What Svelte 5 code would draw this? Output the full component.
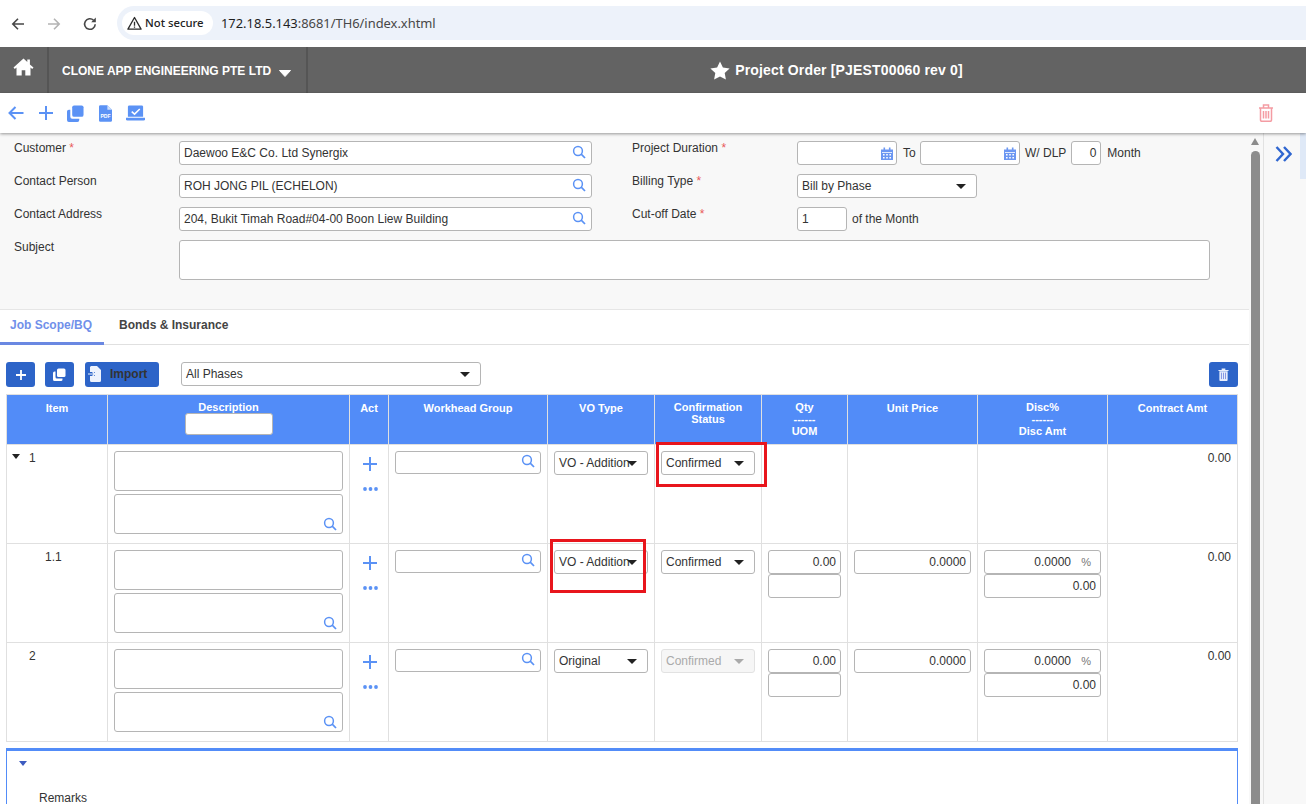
<script>
  const rows = [
    { item: '1', caret: true, vo: 'VO - Addition', status: 'Confirmed', inputs: false },
    { item: '1.1', caret: false, vo: 'VO - Addition', status: 'Confirmed', inputs: true },
    { item: '2', caret: false, vo: 'Original', status: 'Confirmed', disabled: true, inputs: true }
  ];
</script>

{#snippet search(cls)}
  <svg class="ic-search {cls}" viewBox="0 0 14 14" width="14" height="14" aria-hidden="true"><circle cx="6" cy="6" r="4.4" fill="none" stroke="#5b92f5" stroke-width="1.5"/><path d="M9.2 9.2 13 13" stroke="#5b92f5" stroke-width="1.7" fill="none"/></svg>
{/snippet}

{#snippet cal()}
  <svg class="ic-cal" viewBox="0 0 12 13" width="12" height="13" aria-hidden="true"><path d="M0 2.5h12V13H0z" fill="#6c97f2"/><path d="M2.5 0.5h1.6v3H2.5zM7.9 0.5h1.6v3H7.9z" fill="#6c97f2"/><path d="M1 5h10v0.8H1z" fill="#fff"/><path d="M2 7h1.6v1.4H2zM5.2 7h1.6v1.4H5.2zM8.4 7H10v1.4H8.4zM2 10h1.6v1.4H2zM5.2 10h1.6v1.4H5.2zM8.4 10H10v1.4H8.4z" fill="#fff"/></svg>
{/snippet}

{#snippet select(text, disabled = false)}
  <div class="select" class:disabled><span class="sel-text">{text}</span><i class="tri"></i></div>
{/snippet}

<div class="page">
  <div class="chrome">
    <svg class="nav" viewBox="0 0 16 16" width="16" height="16" aria-hidden="true"><path d="M14 8H3M8 2.800 2.800 8 8 13.200" fill="none" stroke="#474747" stroke-width="1.6"/></svg>
    <svg class="nav" viewBox="0 0 16 16" width="16" height="16" aria-hidden="true"><path d="M2 8h11M8 2.800 13.200 8 8 13.200" fill="none" stroke="#b4b4b4" stroke-width="1.6"/></svg>
    <svg class="nav" viewBox="0 0 16 16" width="16" height="16" aria-hidden="true"><path d="M13.200 8.200A5.300 5.300 0 1 1 11.600 4.200" fill="none" stroke="#474747" stroke-width="1.6"/><path d="M13.800 1.600v4.600H9.200z" fill="#474747"/></svg>
    <div class="omni">
      <div class="pill">
        <svg viewBox="0 0 16 16" width="15" height="15" aria-hidden="true"><path d="M8 1.600 15 14H1z" fill="none" stroke="#2b2b2b" stroke-width="1.4" stroke-linejoin="round"/><path d="M7.300 6h1.400v4.400H7.300zM7.300 11.200h1.400v1.400H7.300z" fill="#2b2b2b"/></svg>
        <span>Not secure</span>
      </div>
      <span class="url">172.18.5.143<span class="muted">:8681/TH6/index.xhtml</span></span>
    </div>
  </div>

  <header class="bar">
    <div class="home">
      <svg viewBox="0 0 20 18" width="21" height="18" aria-hidden="true"><path d="M10 0.600 0 9.600l1.300 1.400L3 9.500V17.600h5.200v-5.400h3.600v5.400H17V9.500l1.700 1.500L20 9.600l-3.600-3.200V1.400h-2.600v2.700z" fill="#fff"/></svg>
    </div>
    <div class="company"><span>CLONE APP ENGINEERING PTE LTD</span><svg viewBox="0 0 12 7" width="12" height="7" aria-hidden="true"><path d="M0.500 0.500h11L6 6.500z" fill="#fff" stroke="#fff" stroke-linejoin="round"/></svg></div>
    <div class="title">
      <svg viewBox="0 0 20 19" width="20" height="19" aria-hidden="true"><path d="M10 0.400l2.900 6.100 6.700.9-4.900 4.600 1.200 6.600L10 15.400l-5.900 3.200 1.200-6.600L.4 7.400l6.700-.9z" fill="#fff"/></svg>
      <span>Project Order [PJEST00060 rev 0]</span>
    </div>
  </header>

  <div class="toolbar">
    <svg viewBox="0 0 16 14" width="16" height="14" aria-hidden="true"><path d="M15.500 7H2M7.500 1 1.500 7l6 6" fill="none" stroke="#5b92f5" stroke-width="2"/></svg>
    <svg class="t-plus" viewBox="0 0 14 14" width="14" height="14" aria-hidden="true"><path d="M7 0v14M0 7h14" stroke="#5b92f5" stroke-width="2"/></svg>
    <svg class="t-copy" viewBox="0 0 18 18" width="17" height="17" aria-hidden="true"><rect x="5.500" y="0.500" width="12" height="12" rx="2" fill="#5b92f5"/><path d="M3.500 5H2a2 2 0 0 0-2 2v9a2 2 0 0 0 2 2h9a2 2 0 0 0 2-2v-1.500H5.500a2 2 0 0 1-2-2z" fill="#5b92f5"/></svg>
    <svg class="t-pdf" viewBox="0 0 14 18" width="13" height="17" aria-hidden="true"><path d="M1.500 0H9l5 5v11.500a1.500 1.500 0 0 1-1.500 1.500h-11A1.500 1.500 0 0 1 0 16.500v-15A1.500 1.500 0 0 1 1.500 0z" fill="#5b92f5"/><path d="M9 0v5h5z" fill="#cfe0fd"/><text x="7" y="14" text-anchor="middle" font-family="Liberation Sans, sans-serif" font-size="5.500" font-weight="bold" fill="#fff">PDF</text></svg>
    <svg class="t-check" viewBox="0 0 20 16" width="19" height="16" aria-hidden="true"><path d="M3.500 0h13A1.500 1.500 0 0 1 18 1.500V12H2V1.500A1.500 1.500 0 0 1 3.500 0z" fill="#5b92f5"/><path d="M6 6.500 9 9.200 14.500 3.800" fill="none" stroke="#fff" stroke-width="1.600"/><path d="M0 13h20v1.500a1.500 1.500 0 0 1-1.500 1.500h-17A1.500 1.500 0 0 1 0 14.500z" fill="#5b92f5"/></svg>
    <svg class="t-trash" viewBox="0 0 16 18" width="16" height="18" aria-hidden="true"><path d="M1 4h14M5.500 3.500V1h5v2.500M2.500 4.500v11.500a1.200 1.200 0 0 0 1.200 1.200h8.600a1.200 1.200 0 0 0 1.200-1.200V4.500M5.500 7v7.500M8 7v7.500M10.500 7v7.500" fill="none" stroke="#f49ca3" stroke-width="1.500"/></svg>
  </div>

  <div class="body">
    <main class="main">
      <section class="form">
        <div class="lbl">Customer <em>*</em></div>
        <div class="field"><span>Daewoo E&amp;C Co. Ltd Synergix</span>{@render search('fs')}</div>
        <div class="lbl lbl2">Project Duration <em>*</em></div>
        <div class="inline">
          <div class="field date">{@render cal()}</div><span class="to">To</span>
          <div class="field date">{@render cal()}</div><span class="dlp">W/ DLP</span>
          <div class="field num"><span>0</span></div><span class="mon">Month</span>
        </div>

        <div class="lbl">Contact Person</div>
        <div class="field"><span>ROH JONG PIL (ECHELON)</span>{@render search('fs')}</div>
        <div class="lbl lbl2">Billing Type <em>*</em></div>
        <div class="inline"><div class="billing">{@render select('Bill by Phase')}</div></div>

        <div class="lbl">Contact Address</div>
        <div class="field"><span>204, Bukit Timah Road#04-00 Boon Liew Building</span>{@render search('fs')}</div>
        <div class="lbl lbl2">Cut-off Date <em>*</em></div>
        <div class="inline"><div class="field cutoff"><span>1</span></div><span class="ofm">of the Month</span></div>

        <div class="lbl">Subject</div>
        <div class="subject"></div>
      </section>

      <nav class="tabs">
        <span class="tab active">Job Scope/BQ</span>
        <span class="tab">Bonds &amp; Insurance</span>
      </nav>

      <div class="actions">
        <button class="btn sq" aria-label="Add"><svg viewBox="0 0 10 10" width="10" height="10" aria-hidden="true"><path d="M5 0v10M0 5h10" stroke="#fff" stroke-width="1.800"/></svg></button>
        <button class="btn sq" aria-label="Copy"><svg viewBox="0 0 13 13" width="13" height="13" aria-hidden="true"><rect x="4" y="0.500" width="8.500" height="8.500" rx="1.500" fill="#fff"/><path d="M2.500 3.500H1.500A1.500 1.500 0 0 0 0 5v6.500A1.500 1.500 0 0 0 1.500 13H8a1.500 1.500 0 0 0 1.500-1.500V10.500H4a1.500 1.500 0 0 1-1.500-1.500z" fill="#fff"/></svg></button>
        <button class="btn imp">
          <svg viewBox="0 0 13 16" width="13" height="16" aria-hidden="true"><path d="M3 0h6l4 4v10.500a1.500 1.500 0 0 1-1.500 1.500h-8A1.500 1.500 0 0 1 2 14.500V10h5V6H2V1z" fill="#eef3fd"/><path d="M0 8h6.500M4.500 5.800 7 8l-2.500 2.200" fill="none" stroke="#eef3fd" stroke-width="1.200"/></svg>
          <span>Import</span>
        </button>
        <div class="phases">{@render select('All Phases')}</div>
        <button class="btn sq del" aria-label="Delete"><svg viewBox="0 0 12 14" width="11" height="13" aria-hidden="true"><path d="M0.500 2h11v1.200H.5zM4 .5h4V2H4zM1.500 3.500h9V13a1 1 0 0 1-1 1h-7a1 1 0 0 1-1-1z" fill="#e8eefc"/><path d="M3.800 5v7M6 5v7M8.200 5v7" stroke="#7c8fe0" stroke-width="1"/></svg></button>
      </div>

      <table class="grid">
        <colgroup>
          <col style="width:102px"/><col style="width:242px"/><col style="width:39px"/><col style="width:159px"/><col style="width:107px"/><col style="width:107px"/><col style="width:86px"/><col style="width:130px"/><col style="width:130px"/><col style="width:130px"/>
        </colgroup>
        <thead>
          <tr>
            <th>Item</th>
            <th class="multi"><div>Description</div><div class="filter"></div></th>
            <th>Act</th>
            <th>Workhead Group</th>
            <th>VO Type</th>
            <th class="multi">Confirmation<br/>Status</th>
            <th class="multi">Qty<br/>------<br/>UOM</th>
            <th>Unit Price</th>
            <th class="multi">Disc%<br/>------<br/>Disc Amt</th>
            <th>Contract Amt</th>
          </tr>
        </thead>
        <tbody>
          {#each rows as r}
            <tr>
              <td class="item {r.item === '1.1' ? 'sub' : ''}">
                {#if r.caret}<i class="tri dark"></i>{/if}<span>{r.item}</span>
              </td>
              <td>
                <div class="box tall"></div>
                <div class="box tall gap">{@render search('ds')}</div>
              </td>
              <td class="act">
                <svg viewBox="0 0 14 14" width="14" height="14" aria-hidden="true"><path d="M7 0v14M0 7h14" stroke="#5b92f5" stroke-width="2"/></svg>
                <svg class="dots" viewBox="0 0 15 4" width="15" height="4" aria-hidden="true"><circle cx="2" cy="2" r="1.900" fill="#5b92f5"/><circle cx="7.500" cy="2" r="1.900" fill="#5b92f5"/><circle cx="13" cy="2" r="1.900" fill="#5b92f5"/></svg>
              </td>
              <td><div class="box wh">{@render search('ws')}</div></td>
              <td>{@render select(r.vo)}</td>
              <td>{@render select(r.status, r.disabled)}</td>
              <td>
                {#if r.inputs}
                  <div class="box num2"><span>0.00</span></div>
                  <div class="box num2"></div>
                {/if}
              </td>
              <td>
                {#if r.inputs}<div class="box num2"><span>0.0000</span></div>{/if}
              </td>
              <td>
                {#if r.inputs}
                  <div class="box num2 pct"><span>0.0000</span><b>%</b></div>
                  <div class="box num2"><span>0.00</span></div>
                {/if}
              </td>
              <td class="amt">0.00</td>
            </tr>
          {/each}
        </tbody>
      </table>

      <section class="remarks">
        <i class="tri blue"></i>
        <div class="rem-label">Remarks</div>
      </section>
    </main>

    <div class="scroll"><i class="up"></i><i class="thumb"></i></div>

    <aside class="side">
      <svg viewBox="0 0 17 16" width="17" height="16" aria-hidden="true"><path d="M1.500 1 8 8l-6.500 7M9 1l6.500 7L9 15" fill="none" stroke="#2f66d0" stroke-width="2.400"/></svg>
      <i class="strip"></i>
    </aside>
  </div>

  <i class="mark m1"></i>
  <i class="mark m2"></i>
</div>

<style>
  :global(body) { margin: 0; }
  .page {
    position: relative;
    width: 1306px;
    height: 804px;
    overflow: hidden;
    background: #fff;
    display: flex;
    flex-direction: column;
    font: 12px/14px "Liberation Sans", Arial, sans-serif;
    color: #333;
  }
  i { display: block; font-style: normal; }

  .chrome { height: 47px; flex: none; display: flex; align-items: center; padding-left: 10px; box-sizing: border-box; }
  .nav { margin-right: 20px; flex: none; }
  .nav:nth-child(3) { margin-right: 19px; }
  .omni {
    flex: 1; height: 34px; margin-top: -1px; background: #edf2fa; border-radius: 17px 0 0 17px;
    display: flex; align-items: center; padding-left: 5px;
    font-family: "Noto Sans", sans-serif;
  }
  .pill {
    width: 91px; height: 24px; box-sizing: border-box; padding-left: 5px; background: #fff; border-radius: 12px;
    display: flex; align-items: center; gap: 3px; font-size: 11.3px; font-weight: 500; color: #222;
    white-space: nowrap;
  }
  .url { margin-left: 8px; font-size: 12.9px; color: #1f1f1f; white-space: nowrap; }
  .muted { color: #474747; }

  .bar { height: 46px; flex: none; background: #636363; display: flex; color: #fff; font-weight: bold; }
  .home { flex: none; box-sizing: border-box; padding: 11px 0 0 13px; border-right: 2px solid #555; width: 49px; }
  .company { width: 259px; flex: none; box-sizing: border-box; border-right: 2px solid #555; display: flex; align-items: center; padding-left: 13px; gap: 8px; padding-top: 2px; }
  .company svg { margin-top: 5px; }
  .title { flex: 1; display: flex; justify-content: center; align-items: center; gap: 5px; font-size: 14px; letter-spacing: .16px; padding-left: 59px; }

  .toolbar {
    height: 40px; flex: none; display: flex; align-items: center; padding-left: 8px; position: relative; z-index: 2;
    box-shadow: 0 1px 3px rgba(0,0,0,.4);
    background: #fff;
  }
  .t-plus { margin-left: 15px; }
  .t-copy { margin-left: 14px; }
  .t-pdf { margin-left: 15px; }
  .t-check { margin-left: 14px; }
  .t-trash { margin-left: auto; margin-right: 32px; }

  .body { flex: 1; display: flex; min-height: 0; }
  .main { width: 1249px; flex: none; }

  .form {
    height: 177px; box-sizing: border-box; background: #f8f8f8; padding: 8px 0 0 14px;
    display: grid; grid-template-columns: 165px 413px 205px 1fr; grid-auto-rows: 24px; row-gap: 9px;
    border-bottom: 1px solid #e6e6e6;
  }
  .lbl { line-height: 14px; }
  .lbl em { font-style: normal; color: #e85a5a; }
  .lbl2 { padding-left: 40px; }
  .field {
    position: relative; height: 24px; box-sizing: border-box; background: #fff; border: 1px solid #b5b5b5; border-radius: 3px;
    padding: 0 4px; display: flex; align-items: center; white-space: nowrap;
  }
  .ic-search { position: absolute; }
  .fs { right: 5px; top: 3px; }
  .inline { display: flex; align-items: center; white-space: nowrap; }
  .date { width: 100px; }
  .ic-cal { position: absolute; right: 3px; top: 5px; }
  .to { margin: 0 6px; width: 11px; }
  .dlp { margin: 0 5px; }
  .num { width: 30px; justify-content: flex-end; }
  .mon { margin-left: 6px; }
  .billing { width: 180px; }
  .cutoff { width: 50px; }
  .ofm { margin-left: 5px; }
  .subject {
    grid-column: 2 / 5; width: 1031px; height: 40px; box-sizing: border-box; background: #fff; border: 1px solid #b5b5b5; border-radius: 3px;
  }

  .select {
    position: relative; height: 24px; box-sizing: border-box; background: #fff; border: 1px solid #b5b5b5; border-radius: 3px;
    padding-left: 4px; display: flex; align-items: center; white-space: nowrap;
  }
  .select .tri { position: absolute; right: 10px; top: 9px; }
  .select.disabled { background: #f6f6f6; border-color: #e2e2e2; color: #aaa; }
  .select.disabled .tri { border-top-color: #aaa; }
  .tri { width: 0; height: 0; border-left: 5px solid transparent; border-right: 5px solid transparent; border-top: 5px solid #222; }

  .tabs { height: 35px; box-sizing: border-box; border-bottom: 1px solid #e0e0e0; display: flex; font-weight: bold; }
  .tab { padding: 8px 10px 0; height: 34px; box-sizing: border-box; white-space: nowrap; color: #444; }
  .tab.active { width: 104px; color: #7090ea; border-bottom: 3px solid #6a88e2; height: 35px; margin-right: 5px; }

  .actions { height: 49px; box-sizing: border-box; padding: 17px 11px 0 6px; display: flex; align-items: flex-start; gap: 10px; }
  .btn {
    height: 25px; padding: 0; border: 0; border-radius: 3px; background: #2d64c8; display: flex; align-items: center; justify-content: center; font: inherit;
  }
  .sq { width: 29px; }
  .imp { width: 74px; margin-left: 1px; justify-content: flex-start; padding: 0 0 1px 3px; box-sizing: border-box; gap: 9px; font-weight: bold; color: #333; }
  .phases { width: 300px; margin-left: 12px; }
  .del { margin-left: auto; }

  .grid { width: 1232px; margin-left: 6px; table-layout: fixed; border-collapse: separate; border-spacing: 0; }
  .grid th {
    height: 51px; box-sizing: border-box; background: #528cf8; color: #fff; font-size: 11px; line-height: 12px; font-weight: bold; vertical-align: top;
    padding: 7px 2px 0; border-top: 1px solid #e0e0e0; border-bottom: 1px solid #e0e0e0; border-right: 1px solid #e0e0e0;
  }
  .grid th.multi { padding-top: 6px; }
  .grid th:first-child, .grid td:first-child { border-left: 1px solid #e0e0e0; }
  .filter { width: 88px; height: 22px; box-sizing: border-box; margin: 0 auto; background: #fff; border: 1px solid #b5b5b5; border-radius: 3px; }
  .grid td {
    height: 99px; box-sizing: border-box; vertical-align: top; padding: 6px; border-right: 1px solid #e0e0e0; border-bottom: 1px solid #e0e0e0;
  }
  .grid td.item { padding: 7px 0 0 22px; position: relative; line-height: 13px; }
  .grid td.item.sub { padding-left: 38px; }
  .item .tri { position: absolute; left: 5px; top: 9px; }
  .tri.dark { border-left-width: 4.5px; border-right-width: 4.5px; }

  .box { position: relative; box-sizing: border-box; background: #fff; border: 1px solid #b5b5b5; border-radius: 3px; }
  .tall { height: 40px; }
  .gap { margin-top: 3px; }
  .ds { right: 5px; bottom: 2px; }
  .wh { height: 23px; }
  .ws { right: 5px; top: 2px; }
  .num2 { height: 24px; display: flex; align-items: center; justify-content: flex-end; padding-right: 4px; }
  .pct { padding-right: 29px; }
  .pct b { position: absolute; right: 9px; top: 4px; font-weight: normal; font-size: 11px; color: #777; }

  .grid td.act { padding: 12px 0 0; text-align: center; }
  .act svg { display: block; margin: 0 auto; }
  .act svg:first-child { position: relative; left: 1px; }
  .act .dots { margin-top: 16px; position: relative; left: 1px; }
  .grid td.amt { text-align: right; line-height: 13px; padding-top: 7px; }

  .remarks { position: relative; width: 1232px; height: 70px; margin: 6px 0 0 6px; box-sizing: border-box; border: 1px solid #528cf8; border-top-width: 3px; }
  .tri.blue { position: absolute; left: 12px; top: 10px; border-top-color: #3d5cc0; border-left-width: 4.5px; border-right-width: 4.5px; }
  .rem-label { position: absolute; left: 32px; top: 40px; }

  .scroll { width: 14px; flex: none; position: relative; background: #f8f8f8; }
  .up { position: absolute; left: 2px; top: 5px; width: 0; height: 0; border-left: 4.5px solid transparent; border-right: 4.5px solid transparent; border-bottom: 7px solid #8c8c8c; }
  .thumb { position: absolute; left: 2px; top: 18px; bottom: 0; width: 9px; background: #8c8c8c; border-radius: 4.5px 4.5px 0 0; }

  .side { flex: 1; position: relative; background: #f8f8f8; border-left: 1px solid #e2e2e2; padding: 13px 0 0 11px; }
  .strip { position: absolute; right: 0; top: 0; width: 6px; height: 46px; background: #dfe9f7; }

  .mark { position: absolute; box-sizing: border-box; border: 3px solid #e8151c; }
  .m1 { left: 656px; top: 442px; width: 111px; height: 45px; }
  .m2 { left: 550px; top: 539px; width: 96px; height: 54px; }
</style>
